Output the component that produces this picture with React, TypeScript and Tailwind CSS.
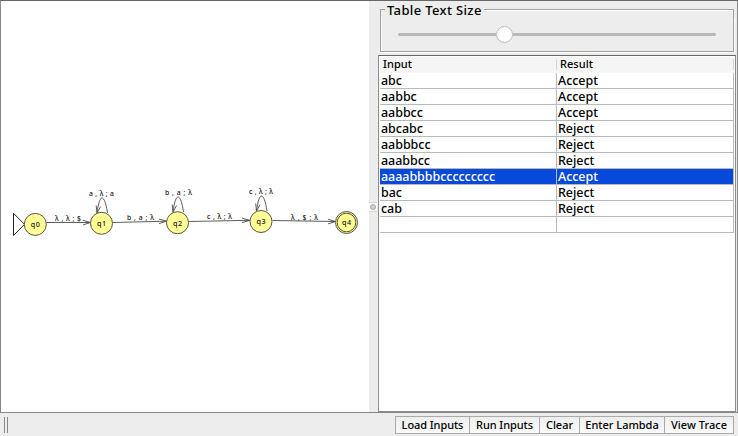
import React from 'react';

const rows: [string, string][] = [
  ['abc', 'Accept'],
  ['aabbc', 'Accept'],
  ['aabbcc', 'Accept'],
  ['abcabc', 'Reject'],
  ['aabbbcc', 'Reject'],
  ['aaabbcc', 'Reject'],
  ['aaaabbbbccccccccc', 'Accept'],
  ['bac', 'Reject'],
  ['cab', 'Reject'],
  ['', ''],
];
const SELECTED = 6;

const states = [
  { name: 'q0', x: 35.3, y: 224.4 },
  { name: 'q1', x: 101.5, y: 223.3 },
  { name: 'q2', x: 177.5, y: 222.7 },
  { name: 'q3', x: 261, y: 221.5 },
  { name: 'q4', x: 346.5, y: 222.5, final: true },
];

const edges = [
  { x1: 46.5, y1: 222.5, x2: 90.5, y2: 222.5, label: 'λ , λ ; $', lx: 55, ly: 220.7, w: 26 },
  { x1: 112.5, y1: 222.5, x2: 166.5, y2: 221.2, label: 'b , a ; λ', lx: 127, ly: 220, w: 27 },
  { x1: 189, y1: 221.5, x2: 249.5, y2: 220.3, label: 'c , λ ; λ', lx: 207, ly: 219, w: 25 },
  { x1: 272.5, y1: 220.5, x2: 335.5, y2: 221.5, label: 'λ , $ ; λ', lx: 291, ly: 220, w: 27 },
];

const loops = [
  { x: 101.5, y: 213, label: 'a , λ ; a', lx: 89, ly: 196, w: 25 },
  { x: 177.5, y: 212, label: 'b , a ; λ', lx: 165, ly: 195, w: 27 },
  { x: 261, y: 211, label: 'c , λ ; λ', lx: 249, ly: 194, w: 24 },
];

function Diagram() {
  return (
    <svg width="368" height="411" viewBox="1 1 368 411" fontFamily='"Noto Sans", sans-serif' fontWeight="500">
      <g fill="none" stroke="#4b4b4b" strokeWidth="0.9">
        <path d="M13.5 213.3V235.5L24.5 224.4Z" stroke="#222" strokeWidth="1" />
        {edges.map((e) => (
          <path key={e.lx} d={`M${e.x1} ${e.y1}L${e.x2} ${e.y2}m-7.5 -2.2l7.5 2.2l-7.5 2.4`} />
        ))}
        {loops.map((l) => (
          <path
            key={l.x}
            d={`M${l.x + 6} ${l.y}C${l.x + 3} ${l.y - 20} ${l.x - 2} ${l.y - 20} ${l.x - 4.5} ${l.y}m-0.8 -7.5l0.8 7.5l3.6 -6.5`}
          />
        ))}
      </g>
      {states.map((s) => (
        <g key={s.name}>
          <circle cx={s.x} cy={s.y} r="11" fill="#ffff96" stroke="#55554a" strokeWidth="1" />
          {s.final && <circle cx={s.x} cy={s.y} r="9.3" fill="none" stroke="#55553a" strokeWidth="1" />}
          <text x={s.x - 4.5} y={s.y + 2.8} fontSize="7.2" textLength="9" fill="#111">{s.name}</text>
        </g>
      ))}
      {[...edges, ...loops].map((l) => (
        <text key={l.lx} x={l.lx} y={l.ly} fontSize="6.8" textLength={l.w} fill="#111">{l.label}</text>
      ))}
    </svg>
  );
}

const buttons = [
  { label: 'Load Inputs', box: 'w-[75px]', track: 'tracking-[-0.08px]' },
  { label: 'Run Inputs', box: 'w-[71px]', track: 'tracking-[-0.08px]' },
  { label: 'Clear', box: 'w-[41px]', track: 'tracking-[0px]' },
  { label: 'Enter Lambda', box: 'w-[86px]', track: 'tracking-[-0.02px]' },
  { label: 'View Trace', box: 'w-[70px]', track: 'tracking-[0.05px]' },
];

export default function App() {
  return (
    <div className="flex h-[436px] w-[738px] flex-col overflow-hidden bg-[#ededed] font-['Noto_Sans',sans-serif] font-medium text-black">
      <div className="flex h-[413px] shrink-0 border border-[#888] border-t-[#666]">
        <div className="h-[411px] w-[368px] shrink-0 bg-white">
          <Diagram />
        </div>
        <div className="flex w-[9px] shrink-0 flex-col pt-[201px]">
          <div className="flex h-[10px] w-[8px] items-center justify-center border-y border-[#d4d4d4] bg-[#f8f8f8]">
            <div className="size-[6px] shrink-0 rounded-full border border-[#aaa] bg-[#d0d0d0]" />
          </div>
        </div>
        <div className="flex min-w-0 flex-1 flex-col">
          <fieldset className="ml-[2px] mt-[2px] flex h-[49px] w-[353px] flex-col border-0">
            <div className="flex h-[13px] shrink-0 items-start">
              <div className="mt-[6px] h-[7px] w-[5px] shrink-0 border-l border-t border-[#a0a0a0]" />
              <span className="whitespace-nowrap px-[2px] text-[13px] leading-[15px] tracking-[0.35px]">Table Text Size</span>
              <div className="mt-[6px] h-[7px] flex-1 border-r border-t border-[#a0a0a0] shadow-[inset_0_1px_0_#fff]" />
            </div>
            <div className="flex h-[36px] shrink-0 items-start border border-t-0 border-[#a0a0a0] px-[17px] pt-[10px] shadow-[1px_1px_0_#fff,inset_1px_0_0_#fff]">
              <div className="flex h-[17px] w-[318px] shrink-0 items-center">
                <div className="h-[3px] w-[98px] rounded-l bg-[#b9b9b9]" />
                <div className="size-[17px] shrink-0 rounded-full border border-[#bbb] bg-white" />
                <div className="h-[3px] flex-1 rounded-r bg-[#b9b9b9]" />
              </div>
            </div>
          </fieldset>
          <div className="mt-[3px] flex h-[357px] w-[358px] flex-col border border-[#8c8c8c] border-t-[#666] bg-white pl-px">
            <div className="mt-px flex h-[16px] w-[354px] shrink-0 bg-[#f5f5f5] pb-[1px] text-[11px] leading-[11px]">
              <div className="mt-[2px] flex h-[11px] w-[177px] items-center border-r border-[#d4d4d4] pb-[2px] pl-[3px] tracking-[0.05px]">Input</div>
              <div className="mt-[2px] flex h-[11px] flex-1 items-center border-r border-[#d4d4d4] pb-[2px] pl-[3px] tracking-[0.05px]">Result</div>
            </div>
            {rows.map(([input, result], i) => (
              <div
                key={i}
                className={`flex h-[16px] w-[354px] shrink-0 text-[12.5px] leading-[16px] ${i === SELECTED ? 'bg-[#0749d9] text-white' : ''}`}
              >
                <div className="w-[177px] shrink-0 border-b border-r border-[#b9b9b9] pl-px tracking-[-0.05px]">{input}</div>
                <div className="flex-1 border-b border-r border-[#b9b9b9] pl-px tracking-[-0.05px]">{result}</div>
              </div>
            ))}
          </div>
        </div>
      </div>
      <div className="flex h-[23px] shrink-0 items-start justify-between pl-[4px] pr-[4px] pt-[3px]">
        <div className="mt-px flex gap-[2px]">
          <div className="h-[16px] w-px bg-[#888]" />
          <div className="h-[16px] w-px bg-[#888]" />
        </div>
        <div className="flex">
          {buttons.map((b) => (
            <button
              key={b.label}
              className={`-ml-px flex h-[18px] shrink-0 items-center justify-center whitespace-nowrap border border-[#aaa] bg-linear-to-b from-[#eeeeee] to-[#fafafa] text-[11px] leading-[16px] ${b.box} ${b.track}`}
            >
              {b.label}
            </button>
          ))}
        </div>
      </div>
    </div>
  );
}
